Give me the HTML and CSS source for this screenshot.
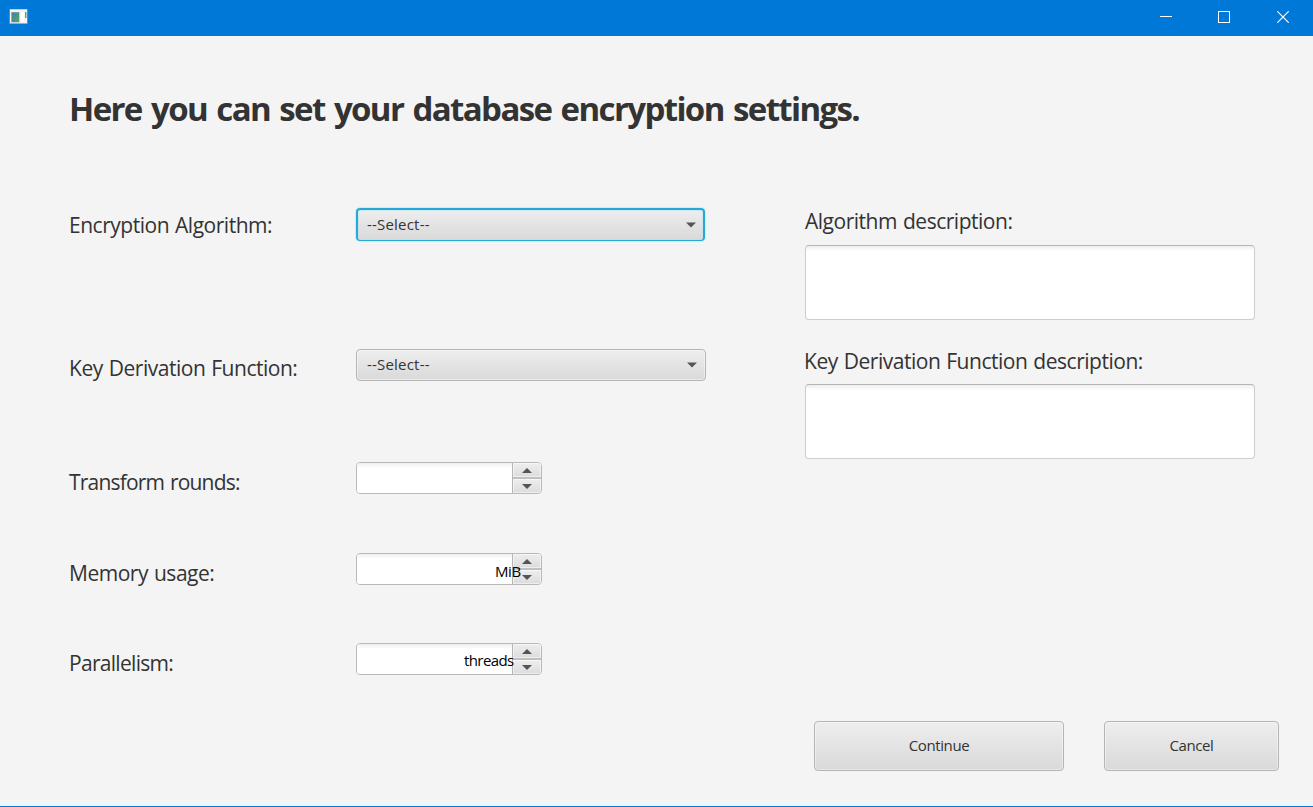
FILE: index.html
```
<!DOCTYPE html>
<html lang="en">
<head>
<meta charset="utf-8">
<title>Database encryption settings</title>
<link rel="stylesheet" href="styles.css">
</head>
<body>
<div class="window">
  <header class="titlebar">
    <svg class="app-icon" width="20" height="18" viewBox="0 0 20 18">
      <defs><linearGradient id="g" x1="0" y1="0" x2="1" y2="1"><stop offset="0" stop-color="#4a7fa5"/><stop offset="1" stop-color="#52a565"/></linearGradient></defs>
      <rect x=".5" y="1" width="18" height="15" fill="#a9a9a9"/>
      <rect x="1" y="1.500" width="17" height="13.500" fill="#f4f4f4"/>
      <rect x="2" y="4" width="8.500" height="10.500" fill="#9fb0b4"/>
      <rect x="3" y="4.500" width="7" height="9.500" fill="url(#g)"/>
      <rect x="12" y="4" width="3" height="10" fill="#fff"/>
      <rect x="16" y="4" width="1.500" height="6" fill="#5b9f88"/>
    </svg>
    <div class="window-controls">
      <svg width="12" height="12" viewBox="0 0 12 12"><path d="M0 5.500H12" stroke="#fff"/></svg>
      <svg width="12" height="12" viewBox="0 0 12 12"><rect x=".5" y=".5" width="11" height="11" fill="none" stroke="#fff"/></svg>
      <svg class="close" width="12" height="12" viewBox="0 0 12 12"><path d="M.3 .3L11.700 11.700M11.700 .3L.3 11.700" stroke="#fff" stroke-width="1.150"/></svg>
    </div>
  </header>
  <main class="content">
    <h1 class="title">Here you can set your database encryption settings.</h1>
    <div class="columns">
      <section class="form">
        <div class="row row-algorithm"><span class="label">Encryption Algorithm:</span>
          <div class="combo focused"><span class="value">--Select--</span><svg width="10" height="6" viewBox="0 0 10 6"><path d="M0 .5H10L5 5.500Z" fill="#555"/></svg></div></div>
        <div class="row row-kdf"><span class="label">Key Derivation Function:</span>
          <div class="combo"><span class="value">--Select--</span><svg width="10" height="6" viewBox="0 0 10 6"><path d="M0 .5H10L5 5.500Z" fill="#555"/></svg></div></div>
        <div class="row row-rounds"><span class="label">Transform rounds:</span>
          <div class="spinner"><div class="field"></div><div class="steps"><div class="step"><svg width="10" height="5" viewBox="0 0 10 5"><path d="M0 5H10L5 0Z" fill="#555"/></svg></div><div class="step"><svg width="10" height="5" viewBox="0 0 10 5"><path d="M0 0H10L5 5Z" fill="#555"/></svg></div></div></div></div>
        <div class="row row-memory"><span class="label">Memory usage:</span>
          <div class="spinner"><div class="field"></div><div class="steps"><div class="step"><svg width="10" height="5" viewBox="0 0 10 5"><path d="M0 5H10L5 0Z" fill="#555"/></svg></div><div class="step"><svg width="10" height="5" viewBox="0 0 10 5"><path d="M0 0H10L5 5Z" fill="#555"/></svg></div></div><span class="unit unit-mib">MiB</span></div></div>
        <div class="row row-parallel"><span class="label">Parallelism:</span>
          <div class="spinner"><div class="field"></div><div class="steps"><div class="step"><svg width="10" height="5" viewBox="0 0 10 5"><path d="M0 5H10L5 0Z" fill="#555"/></svg></div><div class="step"><svg width="10" height="5" viewBox="0 0 10 5"><path d="M0 0H10L5 5Z" fill="#555"/></svg></div></div><span class="unit unit-threads">threads</span></div></div>
      </section>
      <section class="descriptions">
        <span class="label">Algorithm description:</span>
        <div class="textarea"></div>
        <span class="label label-kdf">Key Derivation Function description:</span>
        <div class="textarea"></div>
      </section>
    </div>
    <footer class="actions">
      <button class="button continue">Continue</button>
      <button class="button cancel">Cancel</button>
    </footer>
  </main>
</div>
</body>
</html>
```
FILE: styles.css
```
* { box-sizing: border-box; }
body { margin: 0; font-family: "Open Sans", "Noto Sans", sans-serif; color: #333; }
svg { display: block; flex: none; }
.window { width: 1313px; height: 807px; display: flex; flex-direction: column; background: #f4f4f4; border-bottom: 1px solid #0078d7; overflow: hidden; }
.titlebar { height: 36px; flex: none; display: flex; justify-content: space-between; background: #0078d7; padding: 8px 24px 0 9px; }
.window-controls { display: flex; gap: 46px; padding-top: 3px; }
.close { margin-left: 1px; }
.content { flex: 1; display: flex; flex-direction: column; }
.title { margin: 49px 0 0 69px; height: 48px; line-height: 48px; font-size: 33px; font-weight: 700; white-space: nowrap; letter-spacing: -1.620px; word-spacing: 2.300px; }
.columns { display: flex; flex: none; padding: 73px 0 0 69px; height: 548px; }
.form { width: 736px; padding-top: 2px; }
.row { display: flex; align-items: flex-start; }
.row-algorithm { height: 141px; }
.row-kdf { height: 113px; }
.row-rounds { height: 91px; }
.row-memory { height: 90px; }
.label { display: block; font-size: 21px; line-height: 30px; white-space: nowrap; letter-spacing: -.48px; word-spacing: 1px; }
.row .label { width: 287px; padding-top: 5px; }
.row-algorithm .label { padding-top: 2px; }
.row-kdf .label { padding-top: 4px; }
.row-rounds .label { letter-spacing: -.8px; }
.row-parallel .label { letter-spacing: -.7px; }
.combo { width: 350px; height: 32px; display: flex; align-items: center; justify-content: space-between; padding: 0 8px 0 10px; border: 1px solid #b5b5b5; border-radius: 4px; background: linear-gradient(#eee, #d9d9d9); box-shadow: inset 0 0 0 1px rgba(255,255,255,.45); font-size: 15px; letter-spacing: .2px; }
.combo.focused { width: 349px; height: 33px; border: 2px solid #25a9d8; border-bottom-width: 1px; padding: 0 7px 0 9px; box-shadow: 0 0 1px 1px #d3e9f2, inset 0 0 0 1px rgba(180,225,240,.5); }
.value { padding-bottom: 2px; }
.spinner { position: relative; width: 186px; height: 32px; display: flex; border: 1px solid #b9b9b9; border-radius: 4px; background: #fff; }
.field { flex: 1; border-radius: 3px 0 0 3px; background: linear-gradient(#eee, #fff 5px); }
.steps { width: 29px; display: flex; flex-direction: column; gap: 2px; background: #c0c0c0; border-left: 1px solid #b5b5b5; border-radius: 0 3px 3px 0; overflow: hidden; }
.step { flex: 1; display: flex; align-items: center; justify-content: center; background: linear-gradient(#eee, #dcdcdc); box-shadow: inset 0 0 0 1px rgba(255,255,255,.5); }
.unit { position: absolute; color: #000; font-size: 15px; line-height: 20px; white-space: nowrap; }
.unit-mib { left: 138px; top: 7px; letter-spacing: -.4px; }
.unit-threads { left: 107px; top: 6px; letter-spacing: -.6px; }
.descriptions { width: 450px; }
.textarea { height: 75px; margin: 9px 0 26px; border: 1px solid #cdcdcd; border-top-color: #b5b5b5; border-radius: 4px; background: linear-gradient(#eee, #fff 5px); }
.label-kdf { margin-left: -1px; }
.label-kdf + .textarea { margin-top: 8px; }
.actions { display: flex; gap: 40px; padding: 40px 0 0 814px; }
.button { height: 50px; padding: 0 0 2px; font: 15px "Open Sans", "Noto Sans", sans-serif; letter-spacing: -.4px; color: #333; border: 1px solid #b5b5b5; border-radius: 4px; background: linear-gradient(#eee, #d9d9d9); box-shadow: inset 0 0 0 1px rgba(255,255,255,.4); }
.continue { width: 250px; }
.cancel { width: 175px; }
```
